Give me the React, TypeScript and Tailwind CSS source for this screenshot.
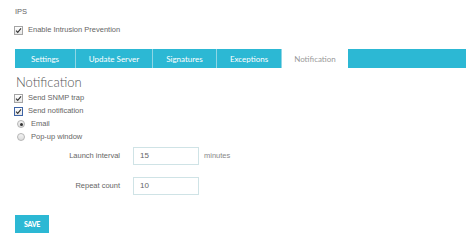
import React from 'react';

const Check = ({ focused = false }: { focused?: boolean }) => (
    <span
        className={`w-[9px] h-[9px] shrink-0 flex items-center justify-center border bg-gradient-to-b from-white to-[#e6e6e6] ${focused ? 'border-[#3e64a6]' : 'border-[#a5a5a5]'}`}
    >
        <svg viewBox="0 0 8 8" className="w-[7px] h-[7px]">
            <path d="M1.2 4.2 L3.1 6.1 L6.9 1.6" fill="none" stroke="#333" strokeWidth="1.3" />
        </svg>
    </span>
);

const Radio = ({ checked = false }: { checked?: boolean }) => (
    <span className="w-[8px] h-[8px] shrink-0 rounded-full border border-[#b5b5b5] bg-gradient-to-b from-[#f4f4f4] to-[#dcdcdc] flex items-center justify-center">
        {checked && <span className="w-[3px] h-[3px] rounded-full bg-[#333]" />}
    </span>
);

const tabs = [
    { label: 'Settings', w: 'w-[61px]' },
    { label: 'Update Server', w: 'w-[77px]' },
    { label: 'Signatures', w: 'w-[64px]' },
    { label: 'Exceptions', w: 'w-[65px]' },
];

export default function App() {
    const label = "font-['Liberation_Sans',Arial,sans-serif] text-[7.5px] text-[#666]";

    return (
        <div className="w-[474px] h-[242px] bg-white pl-[15px] pr-[8px] overflow-hidden">

            {/* Header */}
            <div className={`${label} pt-[7px] h-[17px] leading-[10px] text-[#8a8a8a]`}>IPS</div>

            <div className="flex items-center gap-[5px] mt-[8px] h-[10px] -ml-[1px]">
                <Check />
                <span className={label}>Enable Intrusion Prevention</span>
            </div>

            {/* Tabs */}
            <div className="flex h-[19px] mt-[14px] bg-[#2cb8d4] font-['Lato',sans-serif] text-[8px]">
                {tabs.map((t) => (
                    <div key={t.label} className={`${t.w} flex items-center justify-center text-white border-r border-[#8fd6e5]`}>
                        {t.label}
                    </div>
                ))}
                <div className="w-[66px] flex items-center justify-center bg-white text-[#9a9a9a]">Notification</div>
            </div>

            {/* Notification */}
            <h2 className="mt-[6px] h-[16px] leading-[16px] font-['Lato',sans-serif] font-light text-[13px] text-[#555] pl-[1px]">
                Notification
            </h2>

            <div className="mt-[1.5px] -ml-[1px]">
                <div className="flex items-center gap-[5px] h-[13px]">
                    <Check />
                    <span className={label}>Send SNMP trap</span>
                </div>
                <div className="flex items-center gap-[5px] h-[13px]">
                    <Check focused />
                    <span className={label}>Send notification</span>
                </div>
                <div className="flex items-center gap-[6px] h-[13px] pl-[3px]">
                    <Radio checked />
                    <span className={label}>Email</span>
                </div>
                <div className="flex items-center gap-[6px] h-[13px] pl-[3px]">
                    <Radio />
                    <span className={label}>Pop-up window</span>
                </div>
            </div>

            <div className="flex items-center mt-[3.5px] h-[18px]">
                <span className={`${label} w-[105px] text-right`}>Launch interval</span>
                <div className={`${label} ml-[13px] w-[66px] h-[18px] border border-[#cfe3e6] flex items-center pl-[6px] text-[8px]`}>15</div>
                <span className={`${label} ml-[5px] text-[#888]`}>minutes</span>
            </div>

            <div className="flex items-center mt-[12px] h-[18px]">
                <span className={`${label} w-[105px] text-right`}>Repeat count</span>
                <div className={`${label} ml-[13px] w-[66px] h-[18px] border border-[#cfe3e6] flex items-center pl-[6px] text-[8px]`}>10</div>
            </div>

            <button className="mt-[20px] w-[34px] h-[18px] bg-[#2cb8d4] text-white font-['Lato',sans-serif] font-black text-[7px] tracking-[-0.3px] flex items-center justify-center">
                SAVE
            </button>
        </div>
    );
}
